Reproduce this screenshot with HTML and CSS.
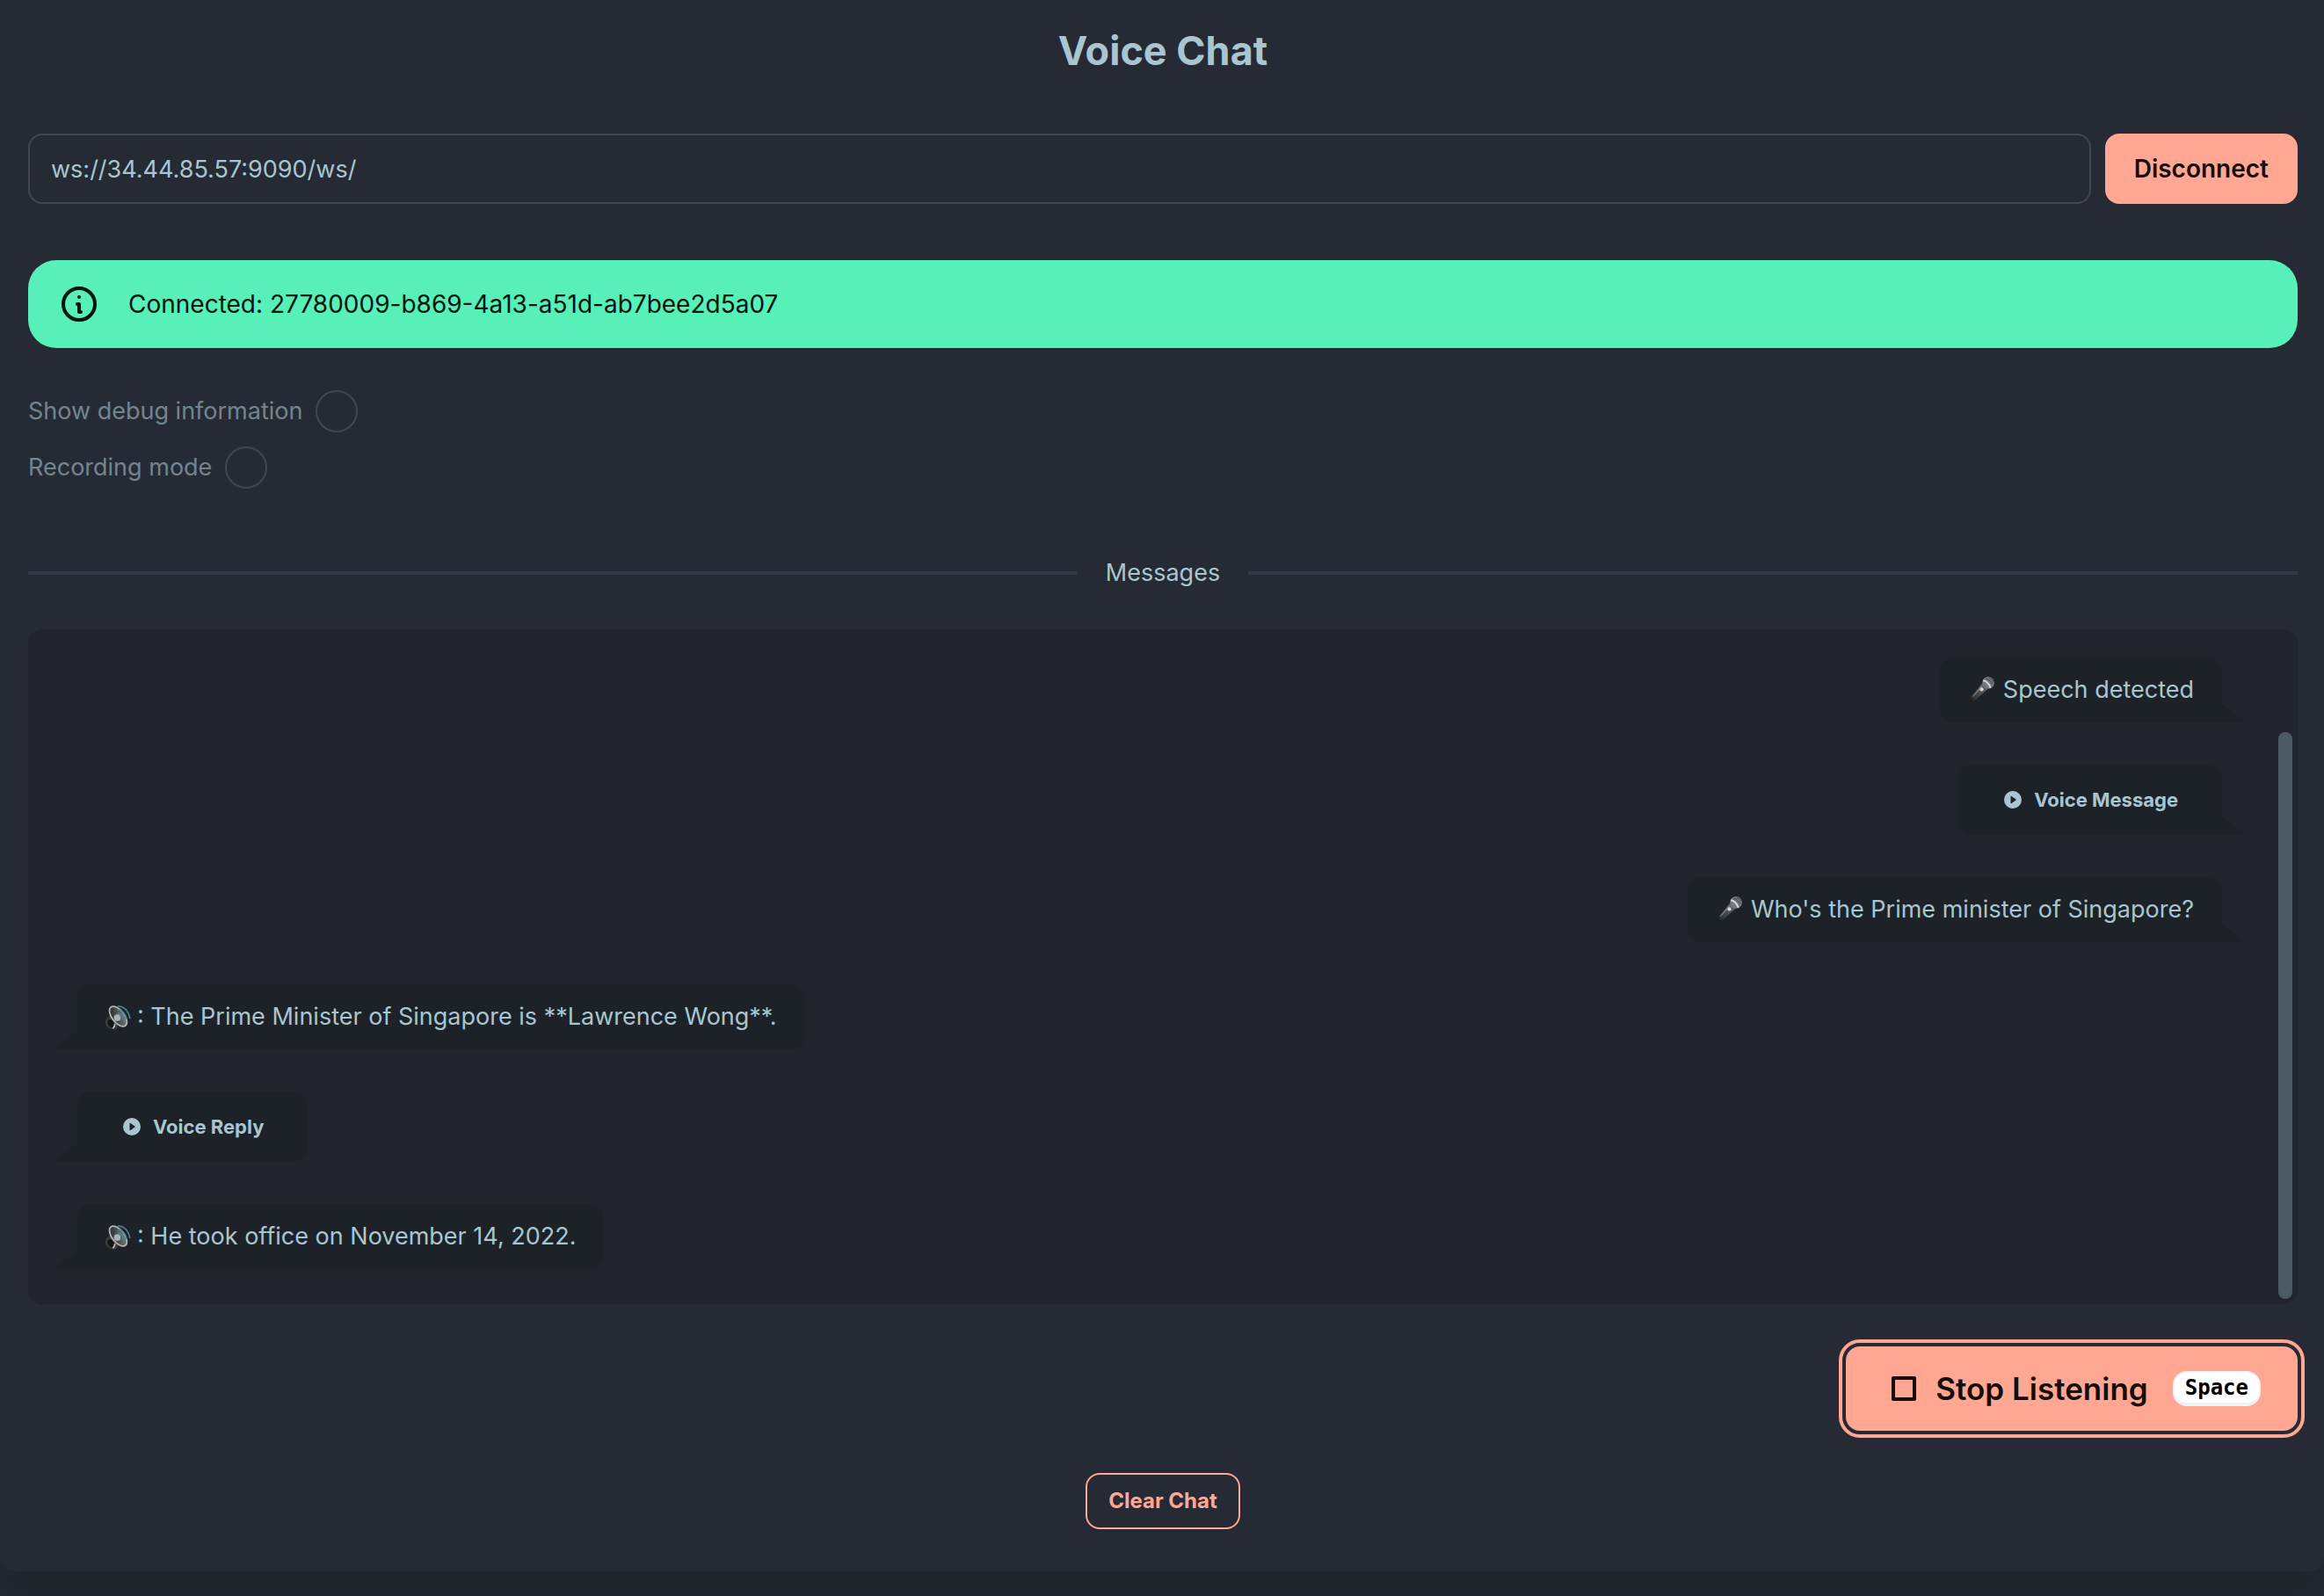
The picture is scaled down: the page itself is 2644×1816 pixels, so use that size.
FILE: index.html
```html
<!DOCTYPE html>
<html lang="en">
<head>
<meta charset="utf-8">
<title>Voice Chat</title>
<link rel="stylesheet" href="styles.css">
</head>
<body>
<svg class="defs" aria-hidden="true">
  <defs>
    <linearGradient id="mic-body" x1="0" y1="1" x2="1" y2="0"><stop offset="0" stop-color="#111113"/><stop offset=".3" stop-color="#3a3a3d"/><stop offset="1" stop-color="#6c6c70"/></linearGradient>
    <linearGradient id="cone" x1="0" y1="0" x2="1" y2="1"><stop offset="0" stop-color="#1c1e20"/><stop offset="1" stop-color="#85898c"/></linearGradient>
    <symbol id="mic" viewBox="0 0 28 28">
      <path d="M1 24 15 7l6 6L5 27q-2 1-3-.5T1 24z" fill="url(#mic-body)"/>
      <path d="M5 21 15 10" stroke="#8a8a8e" stroke-width="1"/>
      <circle cx="21.500" cy="6.500" r="6.400" fill="#77787b"/>
      <path d="M16 4q5.500 1 8 8" stroke="#d6d8da" stroke-width="1.800" fill="none"/>
      <path d="M19 2q5 1.500 7 6M22 1q3 1 5 4" stroke="#4b4c50" stroke-width="1" fill="none"/>
      <circle cx="14.500" cy="13.500" r="2" fill="#d5d5d6"/>
    </symbol>
    <symbol id="speaker" viewBox="1 0 28 28">
      <path d="M2 16q-3 6 2 9.500t9 1L17 19 6 12z" fill="#3b3d40"/>
      <ellipse cx="6.500" cy="21.500" rx="3" ry="4.500" fill="#141517" transform="rotate(-30 6 21)"/>
      <path d="M9 26.500q2-3 2-5" stroke="#b9bbbd" stroke-width="1.600" fill="none"/>
      <ellipse cx="14.500" cy="13.500" rx="6.500" ry="12.500" transform="rotate(-38 14.500 13.500)" fill="url(#cone)" stroke="#b4b7b9" stroke-width="1.600"/>
      <circle cx="13.500" cy="15" r="3.600" fill="#a7b2b6"/>
      <path d="M14 10q6 1 6 8M14 6q8 2 9.500 11M14 2.500q11 1 13 13.500" stroke="#50868f" stroke-width="1.400" fill="none"/>
    </symbol>
    <symbol id="play" viewBox="0 0 20 20">
      <path fill="currentColor" fill-rule="evenodd" d="M10 0a10 10 0 1 0 0 20 10 10 0 0 0 0-20zM7.500 6.600v6.800q0 1.200 1 .6l5-3.400q.8-.6 0-1.200l-5-3.400q-1-.6-1 .6z"/>
    </symbol>
  </defs>
</svg>
<main class="card">
  <h1 class="title">Voice Chat</h1>
  <form class="connect">
    <input class="address" type="text" aria-label="Server address" value="ws://34.44.85.57:9090/ws/">
    <button class="btn btn-solid" type="button">Disconnect</button>
  </form>
  <div class="alert" role="status">
    <svg class="alert-icon" viewBox="0 0 24 24" fill="none" stroke="currentColor" stroke-width="2" stroke-linecap="round" stroke-linejoin="round"><circle cx="12" cy="12" r="9"/><path d="M11 12h1v4.500h1M12 8v0"/></svg>
    <span>Connected: 27780009-b869-4a13-a51d-ab7bee2d5a07</span>
  </div>
  <div class="options">
    <label class="option">Show debug information <input class="toggle" type="checkbox"></label>
    <label class="option">Recording mode <input class="toggle" type="checkbox"></label>
  </div>
  <h2 class="divider">Messages</h2>
  <section class="messages" aria-label="Messages">
    <div class="bubble mine"><svg class="emoji"><use href="#mic"/></svg>Speech detected</div>
    <div class="bubble mine"><button class="voice" type="button"><svg class="play"><use href="#play"/></svg>Voice Message</button></div>
    <div class="bubble mine"><svg class="emoji"><use href="#mic"/></svg>Who's the Prime minister of Singapore?</div>
    <div class="bubble theirs"><svg class="emoji"><use href="#speaker"/></svg>: The Prime Minister of Singapore is **Lawrence Wong**.</div>
    <div class="bubble theirs"><button class="voice" type="button"><svg class="play"><use href="#play"/></svg>Voice Reply</button></div>
    <div class="bubble theirs"><svg class="emoji"><use href="#speaker"/></svg>: He took office on November 14, 2022.</div>
    <div class="scroll-thumb"></div>
  </section>
  <button class="btn btn-solid listen" type="button">
    <svg class="stop" viewBox="0 0 28 28"><rect x="2" y="2" width="24" height="24" fill="none" stroke="currentColor" stroke-width="4" stroke-linejoin="round"/></svg>
    Stop Listening
    <kbd class="key">Space</kbd>
  </button>
  <button class="btn clear" type="button">Clear Chat</button>
</main>
</body>
</html>
```
FILE: styles.css
```css
:root {
  --base: #262a34;
  --dark: #21242c;
  --bubble: #1d2228;
  --line: #3f4852;
  --text: #a9c6d0;
  --error: #ffa793;
  --success: #56f0b8;
}

* { box-sizing: border-box; }

body {
  margin: 0;
  min-height: 100vh;
  background: var(--base);
  color: var(--text);
  font: 27px/40px Inter, "Noto Sans", sans-serif;
}

button, input { font: inherit; color: inherit; }

.defs { position: absolute; width: 0; height: 0; }

.card {
  display: flex;
  flex-direction: column;
  padding: 34px 30px 48px 32px;
  border-radius: 0 0 16px 16px;
  background: var(--base);
  box-shadow: 0 24px 48px #15191c70;
}

.title {
  margin: 0 0 70px;
  font-size: 45px;
  line-height: 48px;
  font-weight: 700;
  text-align: center;
}

.connect { display: flex; gap: 16px; }

.address {
  flex: 1;
  min-width: 0;
  height: 80px;
  padding: 0 24px;
  border: 2px solid var(--line);
  border-radius: 16px;
  background: transparent;
}

.btn {
  display: flex;
  align-items: center;
  justify-content: center;
  border: 0;
  border-radius: 16px;
  font-weight: 600;
}

.btn-solid {
  padding: 0 33px;
  background: var(--error);
  color: #160d0a;
  font-size: 28px;
}

.alert {
  display: flex;
  align-items: center;
  gap: 32px;
  height: 100px;
  margin-top: 64px;
  padding: 0 34px;
  border-radius: 32px;
  background: var(--success);
  color: #03150d;
  font-size: 28px;
}

.alert-icon { width: 48px; height: 48px; }

.options {
  display: flex;
  flex-direction: column;
  align-items: flex-start;
  gap: 16px;
  margin-top: 48px;
  color: #73858f;
}

.option { display: flex; align-items: center; gap: 15px; }

.toggle {
  appearance: none;
  width: 48px;
  height: 48px;
  margin: 0;
  border: 2px solid var(--line);
  border-radius: 50%;
}

.divider {
  display: flex;
  align-items: center;
  gap: 32px;
  margin: 76px 0 44px;
  font-size: 27px;
  font-weight: 400;
}

.divider::before, .divider::after {
  content: "";
  flex: 1;
  height: 4px;
  background: #343945;
}

.messages {
  position: relative;
  display: flex;
  flex-direction: column;
  gap: 48px;
  padding: 32px 86px 40px 56px;
  border-radius: 16px;
  background: var(--dark);
}

.bubble {
  position: relative;
  display: flex;
  align-items: center;
  min-height: 74px;
  padding: 0 32px;
  border-radius: 16px;
  background: var(--bubble);
}

.bubble::after {
  content: "";
  position: absolute;
  bottom: 0;
  width: 24px;
  height: 20px;
  background: var(--bubble);
}

.mine { align-self: flex-end; border-bottom-right-radius: 0; }
.theirs { align-self: flex-start; border-bottom-left-radius: 0; }
.mine::after { left: 100%; clip-path: polygon(0 0, 90% 75%, 100% 100%, 0 100%); }
.theirs::after { right: 100%; clip-path: polygon(100% 0, 10% 75%, 0 100%, 100% 100%); }

.emoji { width: 30px; height: 30px; margin-right: 6px; }
.mine .emoji { margin-right: 10px; }

.voice {
  display: flex;
  align-items: center;
  gap: 14px;
  height: 80px;
  padding: 0 18px 0 20px;
  border: 0;
  background: none;
  font-size: 22px;
  font-weight: 700;
}

.play { width: 20px; height: 20px; }

.scroll-thumb {
  position: absolute;
  top: 117px;
  right: 6px;
  bottom: 6px;
  width: 16px;
  border-radius: 8px;
  background: #4c5a63;
}

.listen {
  align-self: flex-end;
  gap: 22px;
  height: 96px;
  margin-top: 48px;
  padding: 0 42px 0 52px;
  outline: 4px solid var(--error);
  outline-offset: 4px;
  font-size: 35px;
}

.stop { width: 28px; height: 28px; }

.key {
  height: 40px;
  margin-left: 6px;
  padding: 0 12px;
  border: 2px solid #edf2f5;
  border-bottom-width: 4px;
  border-radius: 16px;
  background: #fff;
  color: #000;
  font: 700 24px/34px "DejaVu Sans Mono", monospace;
}

.clear {
  align-self: center;
  height: 64px;
  margin-top: 48px;
  padding: 0 24px;
  border: 2px solid var(--error);
  background: transparent;
  color: var(--error);
  font-size: 24px;
  font-weight: 700;
}
```
